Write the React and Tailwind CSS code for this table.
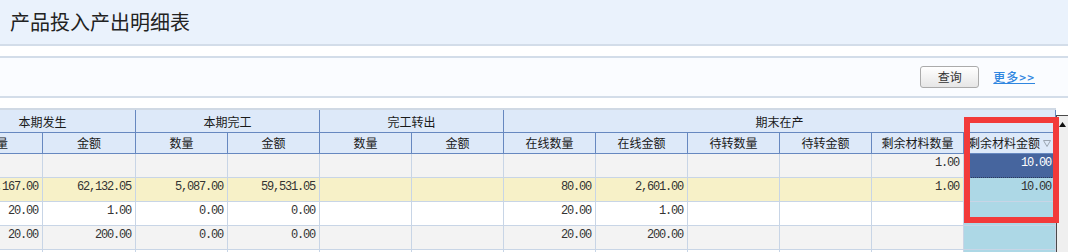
import React from "react";

const head2 = ["数量", "金额", "数量", "金额", "数量", "金额", "在线数量", "在线金额", "待转数量", "待转金额", "剩余材料数量", "剩余材料金额"];

const rows = [
  { bg: "bg-[#F3F3F3]", v: ["", "", "", "", "", "", "", "", "", "", "1.00", "10.00"] },
  { bg: "bg-[#F7F1C8]", v: ["5,167.00", "62,132.05", "5,087.00", "59,531.05", "", "", "80.00", "2,601.00", "", "", "1.00", "10.00"] },
  { bg: "bg-white", v: ["20.00", "1.00", "0.00", "0.00", "", "", "20.00", "1.00", "", "", "", ""] },
  { bg: "bg-[#F3F3F3]", v: ["20.00", "200.00", "0.00", "0.00", "", "", "20.00", "200.00", "", "", "", ""] },
  { bg: "bg-white", v: ["", "", "", "", "", "", "", "", "", "", "", ""] },
];

const cjk = "font-['Noto_Sans_CJK_SC',sans-serif]";

function Triangle() {
  return (
    <svg width="8" height="7" viewBox="0 0 8 7" className="shrink-0">
      <path d="M0.5 0.5 L7.5 0.5 L4 6.5 Z" fill="none" stroke="#9AA4B0" strokeWidth="1" />
    </svg>
  );
}

export default function App() {
  return (
    <div className={`relative w-[1068px] h-[252px] overflow-hidden bg-white ${cjk}`}>
      {/* Title bar */}
      <div className="h-[46px] bg-[#EAF2FC] border-b-2 border-[#D3DDE9] flex items-center pl-[10px]">
        <span className="text-[20px] leading-none text-[#222]">产品投入产出明细表</span>
      </div>

      {/* Toolbar */}
      <div className="mt-[10px] h-[42px] bg-[#FAFCFF] border-y-2 border-[#D3DDE9] flex items-center justify-end gap-[14px] pr-[33px]">
        <button className="w-[59px] h-[22px] rounded-[3px] border border-[#ABABAB] bg-gradient-to-b from-white to-[#E6E6E6] text-[12px] leading-none text-[#333] flex items-center justify-center">
          查询
        </button>
        <a className="text-[12px] leading-none text-[#2F86E0] underline tracking-[1px] font-medium">更多&gt;&gt;</a>
      </div>

      {/* Grid area */}
      <div className="mt-[10px] flex">
        <div className="w-[1056px] overflow-hidden border-t-2 border-[#D0D9E4]">
          <div className="ml-[-50px] w-[1106px] grid grid-cols-[93px_93px_repeat(10,92px)]">
            {/* Header row 1 */}
            {[
              ["本期发生", "col-span-2"],
              ["本期完工", "col-span-2"],
              ["完工转出", "col-span-2"],
              ["期末在产", "col-span-6"],
            ].map(([t, span]) => (
              <div
                key={t}
                className={`${span} h-[23px] bg-[#DDE9F9] border-r border-b border-[#6688C0] flex items-center justify-center pt-[2px] text-[12px] text-[#1A1A1A]`}
              >
                {t}
              </div>
            ))}
            {/* Header row 2 */}
            {head2.map((t, i) => (
              <div
                key={"h" + i}
                className="h-[21px] bg-[#DDE9F9] border-r border-b border-[#6688C0] flex items-center justify-center gap-[3px] text-[12px] text-[#1A1A1A] whitespace-nowrap"
              >
                <span>{t}</span>
                {i === 11 && <Triangle />}
              </div>
            ))}
            {/* Data rows */}
            {rows.map((r, ri) =>
              r.v.map((val, ci) => {
                const last = ci === 11;
                let bg = r.bg;
                let color = "text-[#333]";
                let extra = "";
                if (last) {
                  if (ri === 0) {
                    bg = "bg-[#46659E]";
                    color = "text-white";
                    extra = "border-b-[#2A3A5A] border-dotted";
                  } else {
                    bg = "bg-[#ADD8E6]";
                  }
                }
                return (
                  <div
                    key={ri + "-" + ci}
                    className={`h-[24px] border-r border-b border-[#C8D5E6] ${bg} ${color} ${extra} pr-[4px] pt-[2px] text-right font-['Liberation_Mono',monospace] text-[12px] leading-[15px] tracking-[-1.2px] whitespace-nowrap`}
                  >
                    {val}
                  </div>
                );
              })
            )}
          </div>
        </div>
        {/* Scrollbar */}
        <div className="flex-1 mt-[7px] border-t border-l border-[#4A4A4A] bg-[#EFEFEF] flex flex-col">
          <div className="h-[16px] flex items-center justify-center">
            <svg width="7" height="5" viewBox="0 0 7 5">
              <path d="M3.5 0 L7 5 L0 5 Z" fill="#111" />
            </svg>
          </div>
        </div>
      </div>

      {/* Red highlight overlay */}
      <div className="absolute left-[964px] top-[117px] w-[95px] h-[106px] border-[6px] border-[#F23A3A] pointer-events-none" />
    </div>
  );
}
